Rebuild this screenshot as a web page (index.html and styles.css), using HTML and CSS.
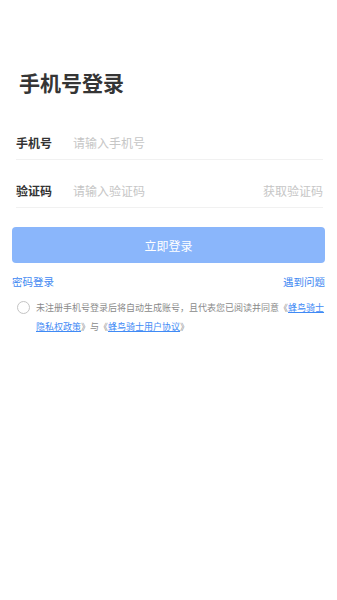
FILE: index.html
```html
<!DOCTYPE html>
<html lang="zh-CN">
<head>
<meta charset="utf-8">
<title>手机号登录</title>
<link rel="stylesheet" href="styles.css">
</head>
<body>
<div class="page">
  <h1 class="title">手机号登录</h1>
  <div class="field">
    <span class="label">手机号</span>
    <span class="placeholder">请输入手机号</span>
  </div>
  <div class="field">
    <span class="label">验证码</span>
    <span class="placeholder grow">请输入验证码</span>
    <span class="placeholder">获取验证码</span>
  </div>
  <button class="submit">立即登录</button>
  <div class="links">
    <span class="link">密码登录</span>
    <span class="link">遇到问题</span>
  </div>
  <div class="agree">
    <span class="radio"></span>
    <p class="agree-text">未注册手机号登录后将自动生成账号，且代表您已阅读并同意《<a class="doc">蜂鸟骑士<br>隐私权政策</a>》与《<a class="doc">蜂鸟骑士用户协议</a>》</p>
  </div>
</div>
</body>
</html>
```
FILE: styles.css
```css
html, body {
  margin: 0;
  padding: 0;
  background: #ffffff;
}
body {
  font-family: "Noto Sans CJK SC", "Noto Sans", sans-serif;
  color: #333333;
}
.page {
  display: flex;
  flex-direction: column;
  padding-top: 67px;
}
.title {
  margin: 0 0 0 19px;
  font-size: 21px;
  line-height: 30px;
  font-weight: 700;
  color: #353535;
}
.field {
  display: flex;
  align-items: flex-end;
  height: 48px;
  box-sizing: border-box;
  padding-bottom: 8px;
  margin: 0 14px 0 16px;
  border-bottom: 1px solid #f1f1f1;
  font-size: 12px;
  line-height: 16px;
}
.title + .field {
  margin-top: 15px;
}
.label {
  width: 57px;
  flex: none;
  font-weight: 700;
  color: #333333;
}
.placeholder {
  color: #c6c6c6;
}
.grow {
  flex: 1;
}
.submit {
  margin: 19px 12px 0 12px;
  height: 36px;
  border: none;
  border-radius: 4px;
  background: #8ab6fb;
  color: #ffffff;
  font-family: inherit;
  font-size: 12px;
  padding: 0;
}
.links {
  display: flex;
  justify-content: space-between;
  margin: 11px 12px 0 12px;
  font-size: 10.5px;
  line-height: 16px;
}
.link {
  color: #4088f2;
}
.agree {
  display: flex;
  align-items: flex-start;
  margin: 8px 11px 0 17px;
}
.radio {
  flex: none;
  width: 13px;
  height: 13px;
  box-sizing: border-box;
  border: 1px solid #c4c4c4;
  border-radius: 50%;
  margin-top: 3px;
  margin-right: 6px;
}
.agree-text {
  margin: 0;
  font-size: 9px;
  line-height: 19px;
  color: #8a8a8a;
}
.doc {
  color: #3f8af5;
  text-decoration: underline;
}
```
